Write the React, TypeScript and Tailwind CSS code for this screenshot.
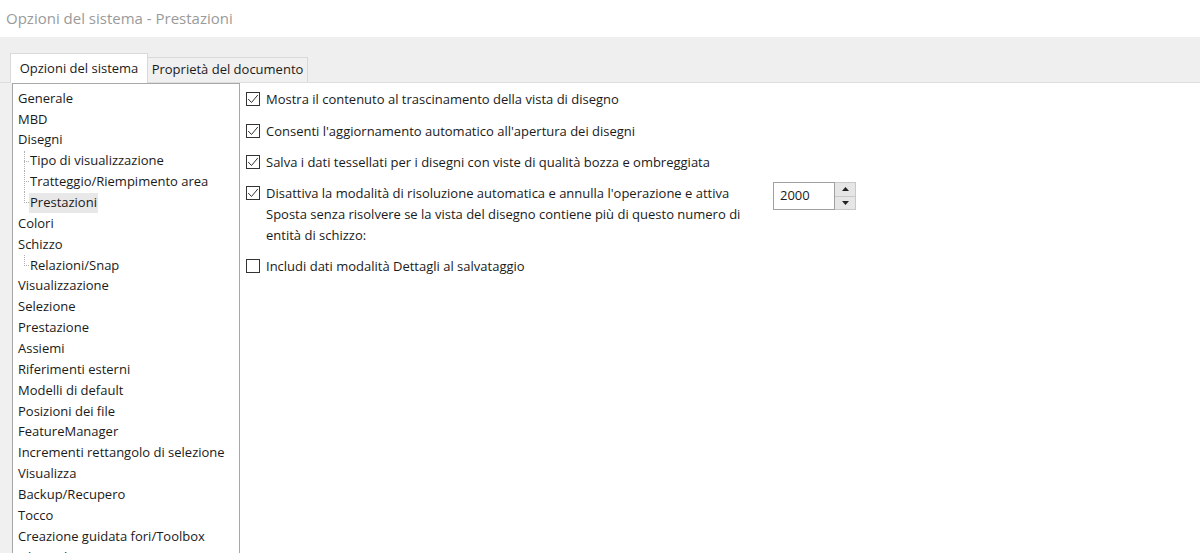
import React from "react";

const font = { fontFamily: '"Open Sans", "Noto Sans", sans-serif' };

type Item = { label: string; child?: boolean; last?: boolean; first?: boolean; selected?: boolean };

const items: Item[] = [
  { label: "Generale" },
  { label: "MBD" },
  { label: "Disegni" },
  { label: "Tipo di visualizzazione", child: true, first: true },
  { label: "Tratteggio/Riempimento area", child: true },
  { label: "Prestazioni", child: true, last: true, selected: true },
  { label: "Colori" },
  { label: "Schizzo" },
  { label: "Relazioni/Snap", child: true, first: true, last: true },
  { label: "Visualizzazione" },
  { label: "Selezione" },
  { label: "Prestazione" },
  { label: "Assiemi" },
  { label: "Riferimenti esterni" },
  { label: "Modelli di default" },
  { label: "Posizioni dei file" },
  { label: "FeatureManager" },
  { label: "Incrementi rettangolo di selezione" },
  { label: "Visualizza" },
  { label: "Backup/Recupero" },
  { label: "Tocco" },
  { label: "Creazione guidata fori/Toolbox" },
  { label: "File Explorer" },
];

function Check({ checked }: { checked: boolean }) {
  return (
    <div className="w-[14px] h-[14px] border border-[#333333] bg-white shrink-0 flex items-center justify-center">
      {checked && (
        <svg width="12" height="12" viewBox="0 0 12 12">
          <path d="M1.2 6 L4.5 9.5 L10.8 2" fill="none" stroke="#333" strokeWidth="1" />
        </svg>
      )}
    </div>
  );
}

function Row({ checked, children }: { checked: boolean; children: React.ReactNode }) {
  return (
    <div className="flex items-start gap-[6px]">
      <div className="pt-[3px]">
        <Check checked={checked} />
      </div>
      <div className="leading-[21px]">{children}</div>
    </div>
  );
}

export default function App() {
  return (
    <div className="w-[1200px] h-[553px] overflow-hidden bg-white text-[13px] text-[#1a1a1a] flex flex-col" style={font}>
      <div className="h-[37px] flex items-center pl-[6px] text-[15px] text-[#9a9a9a] bg-white">
        Opzioni del sistema - Prestazioni
      </div>
      <div className="h-[46px] bg-[#efefef] border-b border-[#dedede] flex items-end pl-[10px]">
        <div className="h-[30px] w-[138px] bg-white border border-b-0 border-[#d9d9d9] flex items-center justify-center text-[13px] relative top-[1px]">
          Opzioni del sistema
        </div>
        <div className="h-[25px] w-[160px] bg-[#f0f0f0] border border-l-0 border-b-0 border-[#d9d9d9] flex items-center justify-center text-[13px]">
          Proprietà del documento
        </div>
      </div>
      <div className="flex-1 flex min-h-0">
        <div className="w-[12px] bg-[#f0f0f0]" />
        <div className="w-[228px] bg-white border border-[#a8a8a8] border-b-0 pl-[5px] pt-[4px] overflow-hidden">
          {items.map((it, i) => (
            <div key={i} className="h-[20.86px] flex items-center relative whitespace-nowrap">
              {it.child && (
                <>
                  <div
                    className={
                      "absolute left-[6px] border-l border-dotted border-[#b0b0b0] " +
                      (it.last ? "top-0 h-[11px]" : "top-0 h-full")
                    }
                  />
                  <div className="absolute left-[6px] top-[10px] w-[5px] border-t border-dotted border-[#b0b0b0]" />
                </>
              )}
              <span
                className={
                  (it.child ? "ml-[11px] px-[1px] " : "") +
                  (it.selected ? "bg-[#e8e8e8] h-[20px] flex items-center " : "")
                }
              >
                {it.label}
              </span>
            </div>
          ))}
        </div>
        <div className="flex-1 pl-[6px] pt-[6px] flex flex-col gap-[10px]">
          <div className="mb-[1px]">
            <Row checked>Mostra il contenuto al trascinamento della vista di disegno</Row>
          </div>
          <Row checked>Consenti l'aggiornamento automatico all'apertura dei disegni</Row>
          <Row checked>Salva i dati tessellati per i disegni con viste di qualità bozza e ombreggiata</Row>
          <div className="flex items-start">
            <div className="w-[520px]">
              <Row checked>
                Disattiva la modalità di risoluzione automatica e annulla l'operazione e attiva Sposta senza risolvere se la
                vista del disegno contiene più di questo numero di entità di schizzo:
              </Row>
            </div>
            <div className="ml-[7px] mt-[-1px] flex">
              <div className="w-[62px] h-[28px] border border-[#a0a0a0] flex items-center pl-[6px] bg-white">2000</div>
              <div className="w-[21px] h-[28px] flex flex-col border border-l-0 border-[#c8c8c8]">
                <div className="flex-1 bg-[#e6e6e6] border-b border-[#c8c8c8] flex items-center justify-center">
                  <svg width="7" height="4" viewBox="0 0 7 4"><path d="M0 4 L3.5 0 L7 4 Z" fill="#222" /></svg>
                </div>
                <div className="flex-1 bg-[#e6e6e6] flex items-center justify-center">
                  <svg width="7" height="4" viewBox="0 0 7 4"><path d="M0 0 L3.5 4 L7 0 Z" fill="#222" /></svg>
                </div>
              </div>
            </div>
          </div>
          <Row checked={false}>Includi dati modalità Dettagli al salvataggio</Row>
        </div>
      </div>
    </div>
  );
}
